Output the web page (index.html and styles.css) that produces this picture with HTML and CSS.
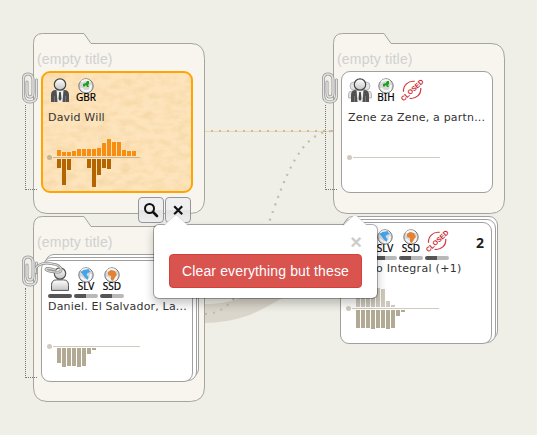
FILE: index.html
```html
<!DOCTYPE html>
<html lang="en">
<head>
<meta charset="utf-8">
<title>Graph workspace</title>
<link rel="stylesheet" href="styles.css">
</head>
<body>
<svg class="defs" width="0" height="0">
  <defs>
    <linearGradient id="metal" x2="0" y2="1"><stop offset="0" stop-color="#fff"/><stop offset="1" stop-color="#c4c4c4"/></linearGradient>
    <symbol id="person" viewBox="0 0 24 24">
      <path d="M3.500 23.400v-5q0-5.500 5-5.500h7q5 0 5 5.500v5z" fill="url(#metal)" stroke="#555"/>
      <circle cx="12" cy="6.500" r="5.700" fill="url(#metal)" stroke="#555" stroke-width="1.200"/>
    </symbol>
    <symbol id="suit" viewBox="0 0 24 24">
      <path d="M3 24v-7q0-5 5-5h8q5 0 5 5v7z" fill="#505050"/>
      <path d="M8.500 12h7L14.500 24h-5z" fill="#eee"/>
      <path d="M11.200 14h1.600l.7 7-1.500 2-1.500-2z" fill="#444"/>
      <path d="M6.500 18v6M17.500 18v6" stroke="#888" stroke-width=".7"/>
      <circle cx="12" cy="6.500" r="5.700" fill="url(#metal)" stroke="#444" stroke-width="1.200"/>
    </symbol>
    <symbol id="group" viewBox="0 0 24 24">
      <g fill="#e4e4e4" stroke="#aaa" stroke-width=".8"><path d="M.5 20v-4q0-3 4-3h15q4 0 4 3v4z"/><circle cx="6" cy="8" r="4"/><circle cx="18" cy="8" r="4"/></g>
      <use href="#suit" width="24" height="24"/>
    </symbol>
    <symbol id="globe" viewBox="0 0 16 16">
      <circle cx="8" cy="8" r="7.200" fill="#d7d7d7" stroke="#777"/>
      <path d="M3 4q5-4 9 0M3 10q4 5 9 2l1-5" stroke="#f7f7f7" stroke-width="2" fill="none"/>
    </symbol>
    <symbol id="europe" viewBox="0 0 16 16"><use href="#globe"/><path d="M5 8V6l3-1 1-2h2v3l-1 1 1 2H9L8 7 6 9z" fill="#19a319"/></symbol>
    <symbol id="america" viewBox="0 0 16 16"><use href="#globe"/><path d="M2.500 5l3-2 5-1 2 3-3 1-1 2 2 2-1 3-3-3-2-3z" fill="#43a4ed"/></symbol>
    <symbol id="africa" viewBox="0 0 16 16"><use href="#globe"/><path d="M4 5l3-2 4 1 2 4-2 2-2 4-2-1V9L4 8z" fill="#e58132"/></symbol>
    <symbol id="closed" viewBox="0 0 24 24">
      <g transform="rotate(-43 12 12)">
        <path d="M4.600 7.500a9.600 9.600 0 0 1 15.200 0M4.600 16.500a9.600 9.600 0 0 0 15.200 0" fill="none" stroke="#d23a40" stroke-width="1.200"/>
        <text x="12" y="14.600" text-anchor="middle" class="stamp">CLOSED</text>
      </g>
    </symbol>
    <symbol id="clip" viewBox="0 0 18 34">
      <g fill="none" stroke-linecap="round">
        <path d="M6 11v11q0 4 3 4t3-4V9q0-6-5-6T2.500 9v15q0 7 6.500 7t6.500-7V9" stroke="#979797" stroke-width="3"/>
        <path d="M6 11v11q0 4 3 4t3-4V9q0-6-5-6T2.500 9v15q0 7 6.500 7t6.500-7V9" stroke="#e4e4e2" stroke-width="1.500"/>
      </g>
    </symbol>
    <filter id="grain" x="0" y="0" width="1" height="1">
      <feTurbulence type="fractalNoise" baseFrequency=".09 .15" numOctaves="4" seed="8"/>
      <feColorMatrix values="0 0 0 0 .88  0 0 0 0 .65  0 0 0 0 .34  1.300 0 0 0 -.47"/>
    </filter>
  </defs>
</svg>

<main class="canvas">
  <svg class="links" width="537" height="435">
    <path class="band" d="M204 313.500C249 313.500 265 294 292 283"/>
    <path class="direct" d="M205 131.500H333"/>
    <path class="dots" d="M211 131H333"/>
    <path class="dots" d="M205 314C269 314 269 131 333 131"/>
  </svg>

  <section class="node folder node-a">
    <svg class="shape" width="173" height="182"><path d="M.5 10.500q0-10 9-10H51l7 10H158q13.500 0 13.500 15V166q0 14-14 14.500H14Q.5 180 .5 166z"/></svg>
    <h2>(empty title)</h2>
    <article class="card selected">
      <svg class="paper" width="149" height="118"><rect width="149" height="118" filter="url(#grain)"/></svg>
      <div class="icons">
        <div class="icon"><svg width="24" height="24"><use href="#suit"/></svg></div>
        <div class="icon"><svg width="16" height="16"><use href="#europe"/></svg><span>GBR</span></div>
      </div>
      <p>David Will</p>
      <svg class="chart" width="100" height="60">
        <path class="axis" d="M6 25.500H93"/><circle cx="2.500" cy="25.500" r="2.500"/>
        <path class="up" d="M12 24v-6m5 6v-4m5 4v-4m5 4v-5m5 5v-7m5 7v-7m5 7v-7m5 7v-7m5 7v-8m5 8v-13m5 13v-17m5 17v-14m5 14v-14m5 14v-6m5 6v-5m5 5v-5"/>
        <path class="down" d="M12 27v9m5-9v26m5-26v11m20-11v9m5-9v28m5-28v16m5-16v9m5-9v10"/>
      </svg>
    </article>
    <svg class="clip" width="18" height="34"><use href="#clip"/></svg>
    <i class="tether"></i>
  </section>

  <section class="node folder node-b">
    <svg class="shape" width="173" height="187"><path d="M.5 10.500q0-10 9-10H51l7 10H158q13.500 0 13.500 15V171q0 14-14 14.500H14Q.5 185 .5 171z"/></svg>
    <h2>(empty title)</h2>
    <div class="stack">
      <article class="card">
        <div class="icons">
          <div class="icon"><svg width="24" height="24"><use href="#person"/></svg><b class="meter full"></b></div>
          <div class="icon"><svg width="16" height="16"><use href="#america"/></svg><span>SLV</span><b class="meter"></b></div>
          <div class="icon"><svg width="16" height="16"><use href="#africa"/></svg><span>SSD</span><b class="meter"></b></div>
        </div>
        <p>Daniel. El Salvador, La...</p>
        <svg class="chart" width="100" height="60">
          <path class="axis" d="M6 25.500H93"/><circle cx="2.500" cy="25.500" r="2.500"/>
          <path class="down" d="M12 27v15m5-15v19m5-19v18m5-18v18m5-18v19m5-19v18m5-18v6m5-6v2"/>
        </svg>
      </article>
    </div>
    <svg class="clip" width="18" height="34"><use href="#clip"/></svg>
    <svg class="clip-side" width="28" height="17"><g fill="none" stroke-linecap="round"><path d="M20 10q-8-3-9-1t9 3q7 1 6-3t-8-5q-9-2-14 1t-3 8" stroke="#888" stroke-width="2.600"/><path d="M20 10q-8-3-9-1t9 3q7 1 6-3t-8-5q-9-2-14 1t-3 8" stroke="#deded9" stroke-width="1.200"/></g></svg>
    <i class="tether"></i>
  </section>

  <section class="node folder node-c">
    <svg class="shape" width="173" height="182"><path d="M.5 10.500q0-10 9-10H51l7 10H158q13.500 0 13.500 15V166q0 14-14 14.500H14Q.5 180 .5 166z"/></svg>
    <h2>(empty title)</h2>
    <article class="card">
      <div class="icons">
        <div class="icon"><svg width="24" height="24"><use href="#group"/></svg></div>
        <div class="icon"><svg width="16" height="16"><use href="#europe"/></svg><span>BIH</span></div>
        <div class="icon"><svg width="24" height="24"><use href="#closed"/></svg></div>
      </div>
      <p>Zene za Zene, a partn...</p>
      <svg class="chart" width="100" height="60"><path class="axis" d="M6 25.500H93"/><circle cx="2.500" cy="25.500" r="2.500"/></svg>
    </article>
    <svg class="clip" width="18" height="34"><use href="#clip"/></svg>
    <i class="tether"></i>
  </section>

  <section class="node stack node-d">
    <article class="card">
      <strong class="count">2</strong>
      <div class="icons">
        <div class="icon"><svg width="24" height="24"><use href="#person"/></svg><b class="meter full"></b></div>
        <div class="icon"><svg width="16" height="16"><use href="#america"/></svg><span>SLV</span><b class="meter"></b></div>
        <div class="icon"><svg width="16" height="16"><use href="#africa"/></svg><span>SSD</span><b class="meter"></b></div>
        <div class="icon"><svg width="24" height="24"><use href="#closed"/></svg><b class="meter"></b></div>
      </div>
      <p class="tail">o Integral (+1)</p>
      <svg class="chart" width="100" height="60">
        <path class="axis" d="M6 25.500H93"/><circle cx="2.500" cy="25.500" r="2.500"/>
        <path class="up" d="M12 24v-14m5 14v-14m5 14v-16m5 16v-18m5 18v-19m5 19v-18m5 18v-6m5 6v-2"/>
        <path class="down" d="M12 27v18m5-18v18m5-18v18m5-18v19m5-19v18m5-18v18m5-18v19m5-19v18m5-18v6m5-6v2"/>
      </svg>
    </article>
  </section>

  <div class="tools">
    <button><svg width="16" height="16" fill="none" stroke="#111"><circle cx="6.500" cy="6.500" r="4.500" stroke-width="2"/><path d="M10 10l4 4" stroke-width="2.500" stroke-linecap="round"/></svg></button>
    <button><svg width="16" height="16" fill="none" stroke="#111" stroke-width="2.200"><path d="M4.200 4.200l8 8m0-8l-8 8"/></svg></button>
  </div>

  <div class="popover">
    <svg class="arrow arrow-left" width="24" height="12"><path d="M0 11.500L12 .5l12 11"/></svg>
    <svg class="arrow arrow-right" width="24" height="12"><path d="M0 11.500L12 .5l12 11"/></svg>
    <span class="close">×</span>
    <button class="danger">Clear everything but these</button>
  </div>
</main>
</body>
</html>
```

FILE: styles.css
```css
* { box-sizing: border-box; }
body { margin: 0; background: #efefe7; font-family: "Liberation Sans", Arial, sans-serif; }
svg { display: block; }
.defs { position: absolute; }
.canvas { position: relative; width: 537px; height: 435px; overflow: hidden; }
.links { position: absolute; inset: 0; fill: none; }
.band { stroke: #dad6cb; stroke-width: 19; }
.direct { stroke: #efd5a5; stroke-width: 1; }
.dots { stroke: #c1bda9; stroke-width: 2.2; stroke-dasharray: 2 6; }

/* Nodes on the graph canvas */
.node { position: absolute; }
.folder { width: 172px; padding: 18px 0 0 8px; }
.node-a { left: 33px; top: 33px; }
.node-b { left: 33px; top: 216px; }
.node-c { left: 333px; top: 33px; }
.node-d { left: 340px; top: 222px; }
.shape { position: absolute; left: 0; top: 0; fill: #f7f5ed; stroke: #a5a49f; stroke-width: 1; }
.folder h2 { position: relative; margin: 0 0 4px -4px; font-size: 14px; font-weight: 400; line-height: 16px; color: #d0d0d0; letter-spacing: .2px; }
.node-b h2 { margin-bottom: 10px; }

.card { position: relative; width: 152px; height: 122px; padding: 6px 0 0 6px; border: 1px solid #a0a0a0; border-radius: 9px; background: #fff; overflow: hidden; }
.card.selected { padding: 5px 0 0 5px; border: 2px solid #ffa400; background: #fee4bc; }
.paper { position: absolute; inset: 0; }
.stack { position: relative; width: 152px; }
.node-d.stack { position: absolute; }
.stack::before, .stack::after { content: ""; position: absolute; width: 152px; height: 122px; border: 1px solid #a0a0a0; border-radius: 9px; background: #fff; }
.stack::before { left: 4px; top: -6px; }
.stack::after { left: 2px; top: -3px; }
.stack .card { z-index: 1; }

.icons { position: relative; display: flex; gap: 2px; height: 32px; }
.icon { position: relative; display: flex; flex-direction: column; align-items: center; width: 24px; height: 32px; }
.icon span { margin-top: -2px; font: 10px/11px "Noto Sans", sans-serif; color: #000; -webkit-text-stroke: .2px #000; }
.meter { position: absolute; left: 0; top: 27px; width: 24px; height: 4px; border-radius: 2px; background: linear-gradient(90deg, #555 50%, #b8b8b8 50%); }
.meter.full { background: #555; }
.stamp { font: bold 6.8px "Liberation Sans", sans-serif; fill: #c9252d; }
.card p { position: relative; margin: 0; font: 11px/16px "DejaVu Sans", Verdana, sans-serif; color: #333; white-space: nowrap; letter-spacing: .18px; }
.card .tail { padding-left: 29px; letter-spacing: .3px; }
.count { position: absolute; right: 7px; top: 12px; font: bold 14px/16px "Noto Sans", sans-serif; color: #222; }
.chart { position: relative; margin: 6px 0 0 -1px; }
.chart circle { fill: #d0cbbd; }
.axis { stroke: #d0cbbd; }
.up, .down { fill: none; stroke-width: 4; }
.up { stroke: #cfcabd; }
.down { stroke: #b3aa96; }
.selected .up { stroke: #f88e11; }
.selected .down { stroke: #b46500; }
.selected .axis { stroke: #c9b48d; }
.selected .chart circle { fill: #c9b48d; }

.clip { position: absolute; left: -12px; top: 38px; }
.tether { position: absolute; left: -8px; top: 72px; width: 12px; height: 85px; border: 1px dotted #777; border-width: 0 0 1px 1px; }
.node-b .tether { height: 90px; }
.clip-side { position: absolute; left: 2px; top: 44px; z-index: 2; }

/* Node actions and confirmation */
.tools { position: absolute; left: 138px; top: 197px; display: flex; gap: 1px; }
.tools button { display: grid; place-items: center; width: 26px; height: 26px; padding: 0; border: 1px solid #96969a; border-radius: 4px; background: linear-gradient(#f0f0f0 50%, #e3e3e3 51%, #eee); }
.popover { position: absolute; left: 153px; top: 224px; width: 225px; height: 75px; padding: 9px 15px 10px; border: 1px solid rgba(0, 0, 0, .3); border-radius: 6px; background: #fff; background-clip: padding-box; box-shadow: 0 5px 10px rgba(0, 0, 0, .22); display: flex; flex-direction: column; justify-content: space-between; z-index: 4; }
.arrow { position: absolute; top: -11px; fill: #fff; stroke: #cfcfcf; stroke-width: .7; }
.arrow-left { left: 10px; }
.arrow-right { left: 189px; }
.close { align-self: flex-end; font-size: 20px; line-height: 16px; font-weight: bold; color: #ccc; }
.danger { width: 193px; height: 34px; padding: 0; border: 1px solid #d43f3a; border-radius: 4px; background: #d9534f; color: #fff; font: 14px/20px "Liberation Sans", Arial, sans-serif; letter-spacing: .14px; white-space: nowrap; }
```
